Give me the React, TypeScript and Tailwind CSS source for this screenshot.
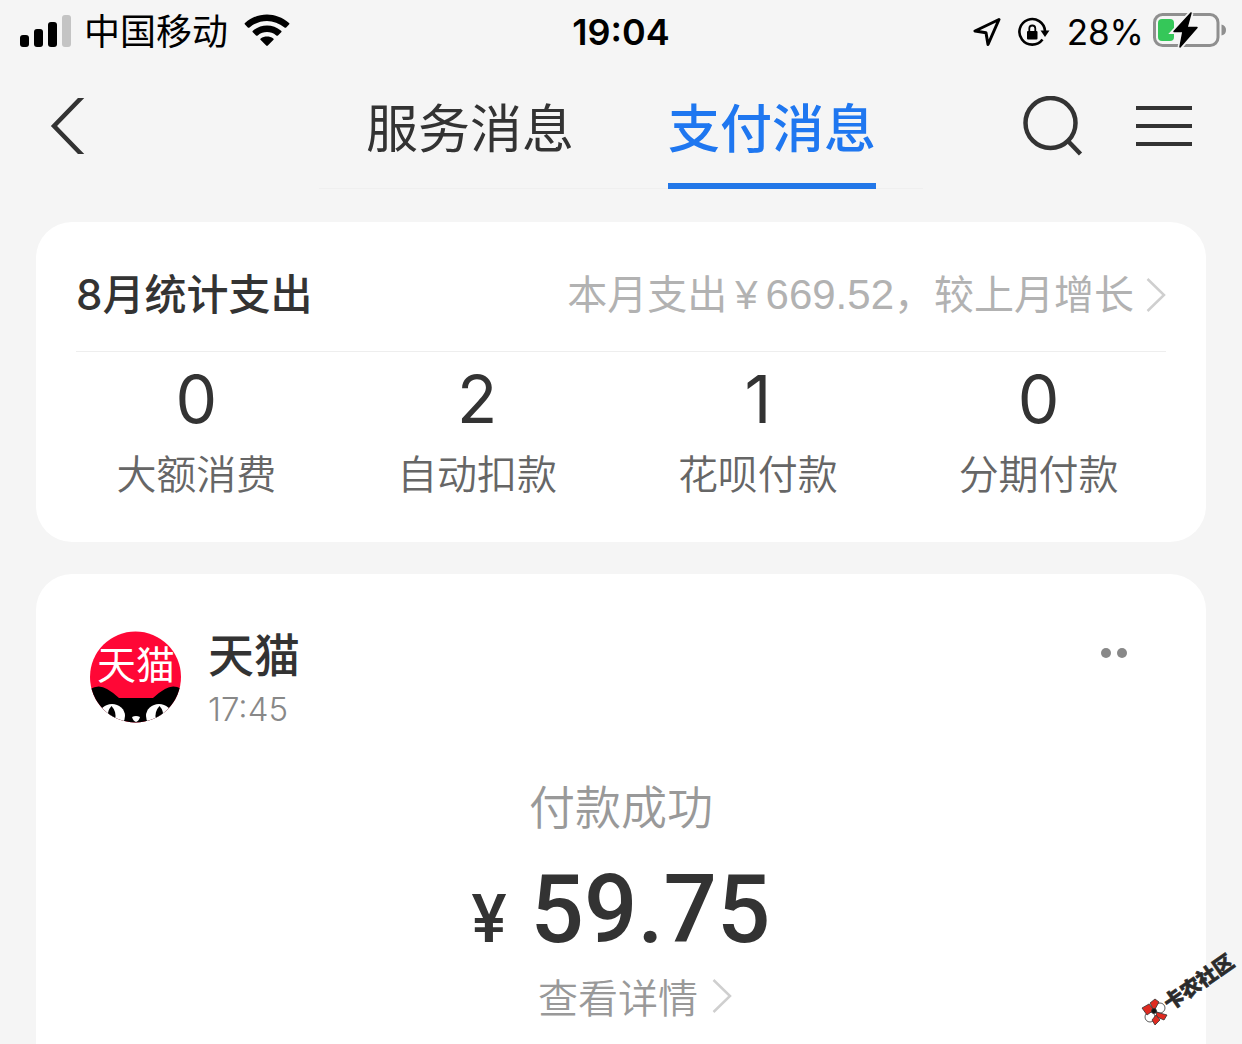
import React from "react";

const stats = [
  { value: "0", label: "大额消费" },
  { value: "2", label: "自动扣款" },
  { value: "1", label: "花呗付款" },
  { value: "0", label: "分期付款" },
];

function SignalIcon() {
  return (
    <svg width="52" height="34" viewBox="0 0 52 34" aria-hidden="true">
      <rect x="0" y="20" width="9" height="12" rx="3" />
      <rect x="14" y="14" width="9" height="18" rx="3" />
      <rect x="28" y="7" width="9" height="25" rx="3" />
      <rect x="42" y="0" width="9" height="32" rx="3" fill="#c4c4c4" />
    </svg>
  );
}

function WifiIcon() {
  return (
    <svg width="46" height="36" viewBox="0 0 46 36" aria-hidden="true">
      <path d="M1 10.5Q0 9.8 1 9C14-2.500 32-2.500 45 9Q46 9.800 45 10.500L42.200 13.500Q41.400 14.200 40.500 13.400C30 4.700 16 4.700 5.500 13.400Q4.600 14.200 3.800 13.500Z" />
      <path d="M8.800 18.300Q8 17.500 8.900 16.700C17.200 9.800 28.800 9.800 37.100 16.700Q38 17.500 37.200 18.300L34 21.400Q33.200 22.100 32.300 21.400C26.500 17 19.500 17 13.700 21.400Q12.800 22.100 12 21.400Z" />
      <path d="M16.500 25.800Q15.800 25.100 16.700 24.400C20.500 21.800 25.500 21.800 29.300 24.400Q30.200 25.100 29.500 25.800L23.800 31.500Q23 32.300 22.200 31.500Z" />
    </svg>
  );
}

function LocationIcon() {
  return (
    <svg width="28" height="30" viewBox="0 0 28 30" fill="none" stroke="#000" strokeWidth="3" strokeLinejoin="round" aria-hidden="true">
      <path d="M26 2.500L2 14L13 15.800L15 27.500Z" />
    </svg>
  );
}

function LockIcon() {
  return (
    <svg width="34" height="30" viewBox="0 0 34 30" fill="none" aria-hidden="true">
      <path d="M25.500 22.500A12.800 12.800 0 1 1 28 14" stroke="#000" strokeWidth="2.600" />
      <path d="M23.500 13.500H32.500L28 20Z" fill="#000" />
      <rect x="10" y="14" width="10.500" height="8.500" rx="1" fill="#000" />
      <path d="M12.300 15V11.500a3 3 0 0 1 6 0V15" stroke="#000" strokeWidth="1.800" />
    </svg>
  );
}

function BatteryIcon() {
  return (
    <svg width="74" height="40" viewBox="0 0 74 40" aria-hidden="true">
      <rect x="2.500" y="2.500" width="63.500" height="31" rx="8" fill="none" stroke="#8f8f8f" strokeWidth="3" />
      <path d="M69.500 12.500Q74 13.500 74 18T69.500 23.500Z" fill="#8f8f8f" />
      <rect x="6" y="7" width="16" height="22" rx="4" fill="#35c759" />
      <path d="M39 1L22 19.500H32L28 35L45 15.500H35Z" fill="#f5f5f5" stroke="#f5f5f5" strokeWidth="5" />
      <path d="M39 1L22 19.500H31L28 35L45 15.500H35Z" fill="#000" stroke="#000" strokeWidth="1.500" strokeLinejoin="round" />
    </svg>
  );
}

function TmallLogo() {
  return (
    <svg className="size-[92px] shrink-0" viewBox="0 0 92 92" role="img" aria-label="天猫">
      <defs>
        <clipPath id="disc"><circle cx="45.500" cy="46" r="45.500" /></clipPath>
      </defs>
      <g clipPath="url(#disc)">
        <rect width="92" height="92" fill="#ff0736" />
        <path d="M0 92V58Q9 53 17 58Q24 62 29 67H63Q68 62 75 58Q83 53 92 58V92Z" fill="#000" />
        <ellipse cx="22" cy="85" rx="13" ry="12" fill="#fff" />
        <ellipse cx="69" cy="85" rx="13" ry="12" fill="#fff" />
        <path d="M21.500 75Q27 81 25 88L18 86Q17 80 21.500 75Z" />
        <path d="M69.500 75Q64 81 66 88L73 86Q74 80 69.500 75Z" />
        <path d="M42 86Q46 84 50 86Q49 90 46 91Q43 90 42 86Z" fill="#fff" />
      </g>
      <text x="46" y="48" textAnchor="middle" fill="#fff" fontSize="39" fontWeight="400" fontFamily="Noto Sans CJK SC, sans-serif">天猫</text>
    </svg>
  );
}

function Chevron() {
  return (
    <svg width="20" height="36" viewBox="0 0 20 36" fill="none" stroke="#cfcfcf" strokeWidth="2.500" aria-hidden="true">
      <path d="M1.500 2L18 18L1.500 34" />
    </svg>
  );
}

function Watermark() {
  return (
    <svg className="absolute right-0 bottom-0" width="112" height="104" viewBox="0 0 112 104" role="img" aria-label="卡农社区">
      <g transform="translate(24 71)" stroke="#333" strokeWidth="0.800">
        <circle cx="6" cy="-3" r="5" fill="#fff" />
        <circle cx="-4" cy="6" r="5" fill="#fff" />
        <path d="M-12-3L-5-7L0-1L-7 4Z" fill="#e02a20" />
        <path d="M-4-8L1-12L5-9L0 0Z" fill="#e02a20" />
        <path d="M2 1L13 4L10 9L3 6Z" fill="#e02a20" />
        <path d="M-2 9L2 4L6 9L1 14Z" fill="#e02a20" />
        <circle r="2.500" fill="#111" />
      </g>
      <text transform="translate(40 71) rotate(-35)" fontSize="20" fontWeight="900" stroke="#2b2b2b" strokeWidth="0.600" fill="#2b2b2b" fontFamily="Noto Sans CJK SC, sans-serif">卡农社区</text>
    </svg>
  );
}

function StatusBar() {
  return (
    <div className="grid h-16 grid-cols-[1fr_auto_1fr] items-center px-5 font-['Inter','Noto_Sans_CJK_SC',sans-serif] text-[36px] leading-none text-black">
      <div className="flex items-center">
        <SignalIcon />
        <span className="ml-3">中国移动</span>
        <span className="ml-4"><WifiIcon /></span>
      </div>
      <time className="font-semibold">19:04</time>
      <div className="-mr-1 flex items-center justify-end">
        <LocationIcon />
        <span className="ml-4"><LockIcon /></span>
        <span className="mr-2 ml-4 text-[35px]">28%</span>
        <BatteryIcon />
      </div>
    </div>
  );
}

function Header() {
  return (
    <header className="grid h-[126px] grid-cols-[1fr_auto_1fr] px-12">
      <button type="button" aria-label="返回" className="mt-8 self-start justify-self-start">
        <svg width="38" height="60" viewBox="0 0 38 60" fill="none" stroke="#333" strokeWidth="4.500" aria-hidden="true">
          <clipPath id="back"><rect y="2" width="38" height="56" /></clipPath>
          <path clipPath="url(#back)" d="M36 -1L6 30L36 61" />
        </svg>
      </button>
      <nav className="flex h-[125px] border-b border-[#efefef] text-[52px] leading-none">
        <button type="button" className="w-[302px] text-[#333]">服务消息</button>
        <button type="button" aria-current="page" className="relative w-[302px] font-medium text-[#1f77f0]">
          支付消息
          <span className="absolute inset-x-[47px] -bottom-px h-1.5 bg-[#2277e8]" />
        </button>
      </nav>
      <div className="mt-8 flex items-start justify-end gap-[52px]">
        <button type="button" aria-label="搜索">
          <svg width="62" height="62" viewBox="0 0 62 62" fill="none" stroke="#333" strokeWidth="4.500" aria-hidden="true">
            <circle cx="28.500" cy="27" r="25" />
            <path d="M45 44L58.500 58" />
          </svg>
        </button>
        <button type="button" aria-label="菜单">
          <svg width="58" height="60" viewBox="0 0 58 60" stroke="#333" strokeWidth="4" aria-hidden="true">
            <path d="M0 12H56M0 30H56M0 48H56" />
          </svg>
        </button>
      </div>
    </header>
  );
}

export default function App() {
  return (
    <div className="relative flex min-h-screen flex-col overflow-hidden bg-[#f5f5f5] font-['Noto_Sans_CJK_SC',sans-serif] text-[#333]">
      <StatusBar />
      <Header />
      <main className="flex flex-1 flex-col gap-8 px-9 pt-8">
        <section className="rounded-[36px] bg-white pb-10">
          <div className="mx-10 flex h-[130px] items-center justify-between border-b border-[#eee] pt-4 font-['Liberation_Sans','Noto_Sans_CJK_SC',sans-serif]">
            <h2 className="font-['Inter','Noto_Sans_CJK_SC',sans-serif] text-[42px] leading-[60px] font-medium">8月统计支出</h2>
            <a href="#stats" className="flex items-center gap-3 text-[40px] leading-[60px] text-[#b2b2b2]">
              <span>本月支出<span className="mx-2">¥</span><span className="text-[42px]">669.52</span>，较上月增长</span>
              <Chevron />
            </a>
          </div>
          <dl className="grid grid-cols-4 pt-2.5 pr-[27px] pl-5 text-center">
            {stats.map((s) => (
              <div key={s.label} className="flex flex-col-reverse">
                <dt className="pt-1.5 text-[40px] leading-[60px] font-[350] text-[#666]">{s.label}</dt>
                <dd className="font-['Inter',sans-serif] text-[66px] leading-[74px] font-normal">{s.value}</dd>
              </div>
            ))}
          </dl>
        </section>

        <section className="flex-1 rounded-t-[36px] bg-white">
          <div className="flex items-start pt-[50px] pr-[79px] pl-[54px]">
            <div className="mt-[7px]"><TmallLogo /></div>
            <div className="ml-[26px] flex-1">
              <h3 className="text-[46px] leading-[56px] font-medium">天猫</h3>
              <time className="block font-['Inter',sans-serif] text-[33px] leading-[58px] font-light text-[#888]">17:45</time>
            </div>
            <button type="button" aria-label="更多" className="mt-6 flex gap-1.5">
              <span className="size-2.5 rounded-full bg-[#888]" />
              <span className="size-2.5 rounded-full bg-[#888]" />
            </button>
          </div>
          <div className="flex flex-col items-center pt-8">
            <p className="text-[46px] leading-[68px] font-[350] text-[#999]">付款成功</p>
            <p className="flex items-baseline gap-6 font-['Roboto',sans-serif] leading-[144px] font-medium">
              <span className="text-[66px]">¥</span>
              <span className="text-[94px]">59.75</span>
            </p>
            <a href="#detail" className="-mt-5 flex items-center gap-3.5 pl-7 text-[40px] leading-[48px] font-[350] text-[#999]">
              查看详情 <Chevron />
            </a>
          </div>
        </section>
      </main>
      <Watermark />
    </div>
  );
}
